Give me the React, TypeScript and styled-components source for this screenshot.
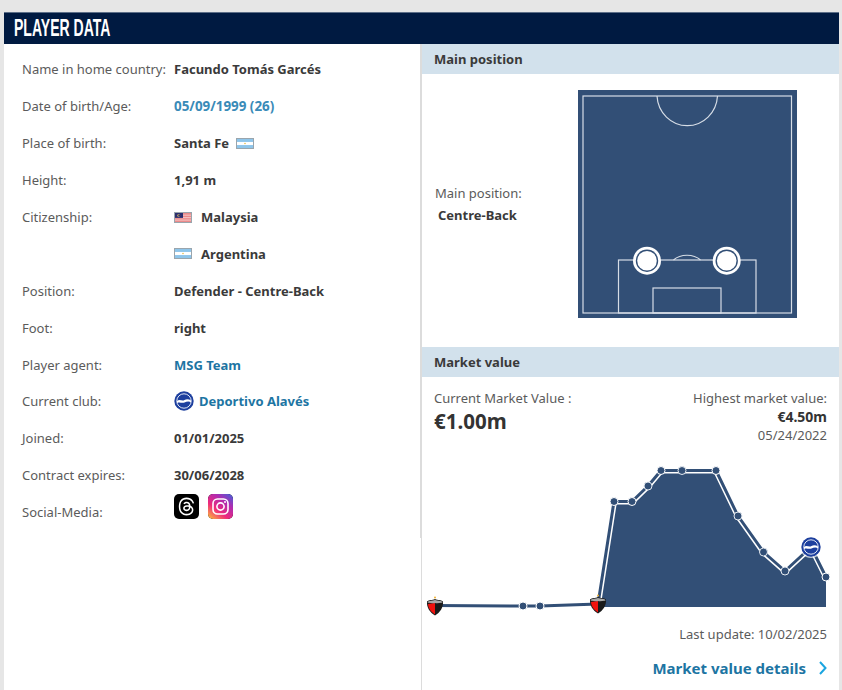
import React from "react";
import styled, { createGlobalStyle } from "styled-components";
import { FaThreads } from "react-icons/fa6";

const Global = createGlobalStyle`
  html, body { margin: 0; padding: 0; height: 690px; overflow: hidden; background: #e6e6e6; }
  body { font-family: "Noto Sans", "Liberation Sans", sans-serif; font-size: 13px; line-height: 18px; color: #333; }
`;

const Page = styled.div`
  height: 690px;
  padding: 12px 3px 0 4px;
  box-sizing: border-box;
  display: flex;
  flex-direction: column;
`;
const Header = styled.header`
  height: 32px;
  flex: none;
  background: #001a41;
  border-top: 1px solid #5d6f88;
  box-sizing: border-box;
  padding-left: 10px;
  display: flex;
  align-items: center;
`;
const Title = styled.h1`
  margin: 0;
  font: 700 23px/1 "Liberation Sans", sans-serif;
  color: #fff;
  white-space: nowrap;
  transform-origin: left center;
  transform: scaleX(0.61);
`;
const Columns = styled.div`
  flex: 1;
  display: grid;
  grid-template-columns: 417px 1fr;
  background: #fff;
  min-height: 0;
`;
const Left = styled.section`
  height: 494px;
  box-sizing: border-box;
  border-right: 1px solid #dcdcdc;
  padding: 7px 0 0 18px;
`;
const Row = styled.div`
  display: grid;
  grid-template-columns: 152px 1fr;
  height: 36.9px;
  align-items: center;
`;
const Label = styled.span`
  color: #5b5b5b;
  white-space: nowrap;
`;
const Value = styled.span<{ $gap?: number }>`
  font-weight: 700;
  color: #3a3a3a;
  display: flex;
  align-items: center;
  white-space: nowrap;
  gap: ${(p) => p.$gap ?? 7}px;
`;
const Link = styled.a<{ $light?: boolean }>`
  font-weight: 700;
  font-size: ${(p) => (p.$light ? "13.4px" : "13px")};
  color: ${(p) => (p.$light ? "#3a8bb8" : "#1d75a3")};
  text-decoration: none;
  white-space: nowrap;
`;
const Flag = styled.svg`
  width: 18px;
  height: 11px;
  flex: none;
  border: 1px solid #9aa5ad;
  box-sizing: border-box;
`;
const Socials = styled.div`
  display: flex;
  gap: 9px;
  margin-top: -12px;
`;
const SocialTile = styled.span`
  width: 25px;
  height: 25px;
  border-radius: 5px;
  display: flex;
  align-items: center;
  justify-content: center;
  color: #fff;
  background: #000;
  font-size: 19px;
`;
const Right = styled.section`
  display: flex;
  flex-direction: column;
  min-width: 0;
  border-left: 1px solid #dcdcdc;
`;
const SubHead = styled.h2`
  margin: 0;
  height: 30px;
  flex: none;
  background: #d2e1ec;
  font-size: 13px;
  font-weight: 700;
  color: #3a3a3a;
  display: flex;
  align-items: center;
  padding-left: 12px;
`;
const Position = styled.div`
  height: 273px;
  flex: none;
  display: flex;
  align-items: center;
  padding-left: 13px;
  box-sizing: border-box;
`;
const PosText = styled.div`
  width: 143px;
  flex: none;
  display: flex;
  flex-direction: column;
  gap: 4px;
  margin-top: -14px;
`;
const PosValue = styled.strong`
  padding-left: 3px;
  color: #3a3a3a;
`;
const Pitch = styled.svg`
  display: block;
  width: 219px;
  height: 228px;
  flex: none;
  margin-top: -13px;
`;
const ValueInfo = styled.div`
  display: flex;
  justify-content: space-between;
  padding: 12px 12px 0 12px;
  height: 83px;
  box-sizing: border-box;
  flex: none;
`;
const Current = styled.div`
  display: flex;
  flex-direction: column;
`;
const Big = styled.strong`
  font-size: 20.5px;
  line-height: 28px;
  color: #333;
`;
const Highest = styled.div`
  display: flex;
  flex-direction: column;
  align-items: flex-end;
  color: #5b5b5b;
  line-height: 18.5px;
`;
const HighestValue = styled.strong`
  color: #333;
  font-size: 14px;
`;
const Chart = styled.svg`
  display: block;
  width: 417px;
  height: 160px;
  flex: none;
`;
const Update = styled.div`
  text-align: right;
  color: #5b5b5b;
  padding-right: 12px;
  margin-top: 5px;
`;
const Details = styled.a`
  display: flex;
  justify-content: flex-end;
  align-items: center;
  gap: 13px;
  padding-right: 12px;
  margin-top: 16px;
  font-size: 15px;
  font-weight: 700;
  color: #1d75a3;
  text-decoration: none;
`;

const Argentina = () => (
  <Flag viewBox="0 0 18 11" preserveAspectRatio="none">
    <rect width="18" height="11" fill="#fff" />
    <rect width="18" height="3.6" fill="#8ec5ea" />
    <rect y="7.4" width="18" height="3.6" fill="#8ec5ea" />
    <circle cx="9" cy="5.5" r="1" fill="#e8c25a" />
  </Flag>
);
const Malaysia = () => (
  <Flag viewBox="0 0 18 11" preserveAspectRatio="none">
    <rect width="18" height="11" fill="#ea8a8a" />
    <rect y="2" width="18" height="1.3" fill="#f6c4c4" />
    <rect y="5" width="18" height="1.3" fill="#f6c4c4" />
    <rect y="8" width="18" height="1.3" fill="#f6c4c4" />
    <rect width="9" height="6" fill="#2c2f6e" />
    <circle cx="4.2" cy="3" r="1.6" fill="#e8c25a" />
    <circle cx="4.9" cy="3" r="1.3" fill="#2c2f6e" />
  </Flag>
);
const Alaves = ({ x = 0, y = 0, size = 20 }: { x?: number; y?: number; size?: number }) => (
  <svg x={x} y={y} width={size} height={size} viewBox="0 0 20 20">
    <circle cx="10" cy="10" r="9.7" fill="#1d3f9e" />
    <circle cx="10" cy="10" r="7.2" fill="none" stroke="#dfe6f5" strokeWidth="1" />
    <path d="M3 10 C5.5 7.6 8 10.6 10.5 9 C12.5 7.8 15 8.2 17 9.4 L17 11.2 C15 9.8 12.5 10.4 10.5 11.4 C8 12.6 5.5 10.6 3 12 Z" fill="#fff" />
  </svg>
);
const Colon = ({ x, y }: { x: number; y: number }) => (
  <g transform={`translate(${x} ${y})`}>
    <path d="M0 3.5 C2 1.5 5 2.5 8 1 C11 2.5 14 1.5 16 3.5 C16.5 9.5 13 14.5 8 17.5 C3 14.5 -0.5 9.5 0 3.5 Z" fill="#1a1a1a" />
    <path d="M1 6 L8 5 L8 16.5 C4.5 14 1.2 11 1 6 Z" fill="#f0120e" />
    <path d="M1 3.5 C3 2.5 5 3.2 8 2 C11 3.2 13 2.5 15 3.5 L15.4 5 C13 4.4 11 6 8 5 C5 6 3 4.4 0.6 5 Z" fill="#a8a8a8" />
    <circle cx="8" cy="-0.6" r="1" fill="#f2b233" />
  </g>
);

const pts: [number, number][] = [
  [13, 145.5], [102, 146], [119, 146], [177, 144], [193, 41.5], [211, 41.5], [227, 26], [240, 10.5],
  [261, 10.5], [295, 10.5], [317, 56], [342.5, 92], [364, 111], [390, 87], [405, 117],
];
const line = pts.map((p) => p.join(",")).join(" ");
const area = `177,147 ${pts.slice(3).map((p) => p.join(",")).join(" ")} 405,147`;
const ringed = new Set([6, 8, 10, 11, 12]);

const rows: [string, React.ReactNode][] = [
  ["Name in home country:", <Value>Facundo Tomás Garcés</Value>],
  ["Date of birth/Age:", <Link $light>05/09/1999 (26)</Link>],
  ["Place of birth:", <Value>Santa Fe <Argentina /></Value>],
  ["Height:", <Value>1,91 m</Value>],
  ["Citizenship:", <Value $gap={9}><Malaysia />Malaysia</Value>],
  ["", <Value $gap={9}><Argentina />Argentina</Value>],
  ["Position:", <Value>Defender - Centre-Back</Value>],
  ["Foot:", <Value>right</Value>],
  ["Player agent:", <Link>MSG Team</Link>],
  ["Current club:", <Value $gap={5}><svg width="20" height="20"><Alaves /></svg><Link>Deportivo Alavés</Link></Value>],
  ["Joined:", <Value>01/01/2025</Value>],
  ["Contract expires:", <Value>30/06/2028</Value>],
];

export default function App() {
  return (
    <Page>
      <Global />
      <Header><Title>PLAYER DATA</Title></Header>
      <Columns>
        <Left>
          {rows.map(([l, v], i) => (
            <Row key={i}><Label>{l}</Label>{v}</Row>
          ))}
          <Row>
            <Label>Social-Media:</Label>
            <Socials>
              <SocialTile><FaThreads /></SocialTile>
              <SocialTile>
                <svg width="25" height="25" viewBox="0 0 25 25">
                  <defs>
                    <linearGradient id="ig" x1="0.1" y1="1" x2="0.9" y2="0">
                      <stop offset="0" stopColor="#fbb040" />
                      <stop offset="0.35" stopColor="#ee2a7b" />
                      <stop offset="0.7" stopColor="#b02bb0" />
                      <stop offset="1" stopColor="#4f5bd5" />
                    </linearGradient>
                  </defs>
                  <rect width="25" height="25" rx="5" fill="url(#ig)" />
                  <rect x="5" y="5" width="15" height="15" rx="4.5" fill="none" stroke="#fff" strokeWidth="1.6" />
                  <circle cx="12.5" cy="12.5" r="3.6" fill="none" stroke="#fff" strokeWidth="1.6" />
                  <circle cx="17" cy="8" r="1" fill="#fff" />
                </svg>
              </SocialTile>
            </Socials>
          </Row>
        </Left>
        <Right>
          <SubHead>Main position</SubHead>
          <Position>
            <PosText>
              <Label>Main position:</Label>
              <PosValue>Centre-Back</PosValue>
            </PosText>
            <Pitch viewBox="0 0 219 228">
              <rect width="219" height="228" fill="#324f76" />
              <g fill="none" stroke="#d6dde6" strokeWidth="1.2">
                <rect x="5" y="6" width="208.5" height="217" />
                <path d="M79 6 A30.3 31.5 0 0 0 139.5 6" />
                <path d="M95.5 170 A18 14 0 0 1 122.5 170" />
                <rect x="40.5" y="170" width="137.5" height="53" />
                <rect x="75" y="198" width="68" height="25" />
              </g>
              <g>
                <circle cx="69" cy="170.7" r="14" fill="#fff" />
                <circle cx="69" cy="170.7" r="11.2" fill="#324f76" />
                <circle cx="69" cy="170.7" r="9.8" fill="#fff" />
                <circle cx="148.7" cy="170.7" r="14" fill="#fff" />
                <circle cx="148.7" cy="170.7" r="11.2" fill="#324f76" />
                <circle cx="148.7" cy="170.7" r="9.8" fill="#fff" />
              </g>
            </Pitch>
          </Position>
          <SubHead>Market value</SubHead>
          <ValueInfo>
            <Current>
              <Label>Current Market Value :</Label>
              <Big>€1.00m</Big>
            </Current>
            <Highest>
              <span>Highest market value:</span>
              <HighestValue>€4.50m</HighestValue>
              <span>05/24/2022</span>
            </Highest>
          </ValueInfo>
          <Chart viewBox="1 0 417 160">
            <polygon points={area} fill="#324f76" />
            <polyline points={line} fill="none" stroke="#fff" strokeWidth="6" strokeLinejoin="round" />
            <polyline points={line} fill="none" stroke="#324f76" strokeWidth="3" strokeLinejoin="round" />
            {pts.map(([x, y], i) =>
              i === 0 || i === 3 || i === 13 ? null : (
                <circle key={i} cx={x} cy={y} r="4" fill="#324f76" stroke={ringed.has(i) ? "#e4e9ef" : "#fff"} strokeWidth="1" />
              )
            )}
            <Colon x={6} y={138} />
            <Colon x={169} y={136} />
            <circle cx="390" cy="87" r="11" fill="#fff" opacity="0.7" />
            <Alaves x={380} y={77} size={20} />
          </Chart>
          <Update>Last update: 10/02/2025</Update>
          <Details>
            Market value details
            <svg width="8" height="14" viewBox="0 0 8 14"><path d="M1 1l5.5 6L1 13" fill="none" stroke="#1ba5e0" strokeWidth="2" /></svg>
          </Details>
        </Right>
      </Columns>
    </Page>
  );
}
